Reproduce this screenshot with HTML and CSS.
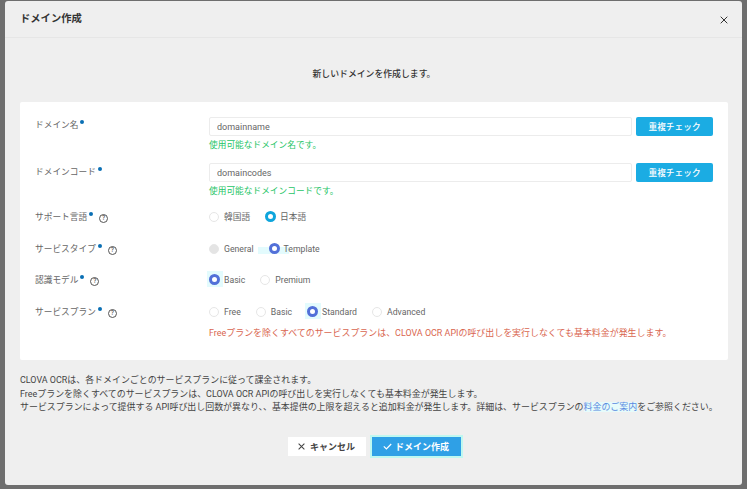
FILE: index.html
```html
<!DOCTYPE html>
<html lang="ja">

<head>
    <meta charset="UTF-8">
    <meta name="viewport" content="width=device-width, initial-scale=1.0">
    <title>ドメイン作成</title>
    <link rel="stylesheet" href="styles.css">
</head>

<body>
    <div class="modal">
        <div class="modal-header">
            <h1>ドメイン作成</h1>
            <svg class="close-icon" viewBox="0 0 8 8"><path d="M.7.7l6.6 6.6M7.3.7L.7 7.3" /></svg>
        </div>

        <div class="modal-body">
            <p class="intro">新しいドメインを作成します。</p>

            <form class="panel">
                <div class="form-row row-name">
                    <div class="label">ドメイン名<span class="req"></span></div>
                    <div class="field">
                        <div class="input-line">
                            <input type="text" value="domainname">
                            <button type="button" class="check-btn">重複チェック</button>
                        </div>
                        <div class="ok-msg">使用可能なドメイン名です。</div>
                    </div>
                </div>

                <div class="form-row row-code">
                    <div class="label">ドメインコード<span class="req"></span></div>
                    <div class="field">
                        <div class="input-line">
                            <input type="text" value="domaincodes">
                            <button type="button" class="check-btn">重複チェック</button>
                        </div>
                        <div class="ok-msg">使用可能なドメインコードです。</div>
                    </div>
                </div>

                <div class="form-row row-lang">
                    <div class="label">サポート言語<span class="req"></span><span class="help">?</span></div>
                    <div class="radios">
                        <span class="radio"><i class="dot"></i>韓国語</span>
                        <span class="radio"><i class="dot on-cyan"></i>日本語</span>
                    </div>
                </div>

                <div class="form-row row-type">
                    <div class="label">サービスタイプ<span class="req"></span><span class="help">?</span></div>
                    <div class="radios">
                        <span class="radio"><i class="dot off"></i>General</span>
                        <span class="radio"><i class="dot on band"></i>Template</span>
                    </div>
                </div>

                <div class="form-row row-model">
                    <div class="label">認識モデル<span class="req"></span><span class="help">?</span></div>
                    <div class="radios">
                        <span class="radio"><i class="dot on glow"></i>Basic</span>
                        <span class="radio"><i class="dot"></i>Premium</span>
                    </div>
                </div>

                <div class="form-row row-plan">
                    <div class="label">サービスプラン<span class="req"></span><span class="help">?</span></div>
                    <div class="field">
                        <div class="radios">
                            <span class="radio"><i class="dot"></i>Free</span>
                            <span class="radio"><i class="dot"></i>Basic</span>
                            <span class="radio"><i class="dot on glow"></i>Standard</span>
                            <span class="radio"><i class="dot"></i>Advanced</span>
                        </div>
                        <div class="warn-msg">Freeプランを除くすべてのサービスプランは、CLOVA OCR APIの呼び出しを実行しなくても基本料金が発生します。</div>
                    </div>
                </div>
            </form>

            <div class="notes">
                <p>CLOVA OCRは、各ドメインごとのサービスプランに従って課金されます。</p>
                <p>Freeプランを除くすべてのサービスプランは、CLOVA OCR APIの呼び出しを実行しなくても基本料金が発生します。</p>
                <p>サービスプランによって提供する API呼び出し回数が異なり、、基本提供の上限を超えると追加料金が発生します。詳細は、サービスプランの<a href="#">料金のご案内</a>をご参照ください。</p>
            </div>

            <div class="actions">
                <button type="button" class="btn-cancel">
                    <svg viewBox="0 0 8 8"><path d="M.7.7l6.6 6.6M7.3.7L.7 7.3" /></svg>キャンセル
                </button>
                <button type="button" class="btn-create">
                    <svg viewBox="0 0 9 7"><path d="M.8 3.4l2.6 2.5L8.2 1" /></svg>ドメイン作成
                </button>
            </div>
        </div>
    </div>
</body>

</html>
```

FILE: styles.css
```css
* {
    box-sizing: border-box;
}

body {
    margin: 0;
    height: 489px;
    overflow: hidden;
    padding: 1px 5px 4px 5px;
    background-color: #6e6e6e;
    font-family: Roboto, "Noto Sans CJK JP", sans-serif;
    font-size: 8.7px;
    color: #555;
}

.modal {
    height: 484px;
    background-color: #efefef;
    border-radius: 3px;
    display: flex;
    flex-direction: column;
}

.modal-header {
    height: 37px;
    flex: none;
    display: flex;
    align-items: center;
    justify-content: space-between;
    padding: 0 14px 0 15px;
    border-bottom: 1px solid #e6e6e6;
}

h1 {
    margin: 0 0 3px 0;
    font-size: 10.3px;
    font-weight: 700;
    color: #333;
}

.close-icon {
    width: 8px;
    height: 8px;
    margin-top: 2px;
    fill: none;
    stroke: #333;
    stroke-width: 1;
}

.modal-body {
    flex: 1;
    padding: 0 14px 0 15px;
}

.intro {
    margin: 0;
    height: 64px;
    padding-top: 29px;
    text-align: center;
    font-size: 8.85px;
    font-weight: 500;
    color: #333;
}

.panel {
    position: relative;
    z-index: 0;
    height: 258px;
    background-color: #fff;
    padding: 15px 15px 0 15px;
    border-radius: 2px;
}

.form-row {
    display: flex;
}

.row-name,
.row-code {
    height: 46px;
}

.row-lang,
.row-model {
    height: 32px;
}

.row-type {
    height: 31px;
}

.label {
    width: 174px;
    flex: none;
    padding-top: 2px;
    line-height: 12px;
    color: #666;
    display: flex;
    align-items: flex-start;
}

.row-code .label {
    padding-top: 3px;
}

.req {
    width: 4px;
    height: 4px;
    margin: 1px 0 0 2px;
    border-radius: 50%;
    background-color: #0a6fb4;
}

.help {
    width: 9px;
    height: 9px;
    margin: 3px 0 0 6px;
    border: 1px solid #555;
    border-radius: 50%;
    font-size: 6.5px;
    line-height: 7px;
    text-align: center;
    font-weight: 500;
    color: #555;
}

.field {
    flex: 1;
}

.input-line {
    display: flex;
    gap: 4px;
    height: 19px;
}

input {
    flex: 1;
    min-width: 0;
    height: 19px;
    padding: 0 7px;
    border: 1px solid #ececec;
    border-radius: 2px;
    font-family: inherit;
    font-size: 9px;
    color: #666;
    outline: none;
}

.check-btn {
    width: 77px;
    height: 19px;
    padding: 0;
    border: none;
    border-radius: 2px;
    background-color: #1bace3;
    color: #fff;
    font-family: inherit;
    font-size: 8.7px;
    font-weight: 500;
}

.ok-msg {
    margin-top: 3px;
    line-height: 12px;
    color: #1fc567;
}

.warn-msg {
    margin-top: 8px;
    font-size: 8.95px;
    line-height: 12px;
    color: #d9664f;
}

.radios {
    display: flex;
    align-items: center;
    gap: 15px;
    height: 15px;
    color: #666;
}

.radio {
    display: flex;
    align-items: center;
    gap: 5px;
    white-space: nowrap;
}

.dot {
    position: relative;
    width: 10px;
    height: 10px;
    border: 1px solid #e6e6e6;
    border-radius: 50%;
    background-color: #fff;
}

.dot.off {
    background-color: #e4e4e4;
}

.dot.on,
.dot.on-cyan {
    width: 11px;
    height: 11px;
    margin-right: -1px;
    border: 3px solid #5270d8;
}

.dot.on-cyan {
    border-color: #0ea5dc;
}

/* highlight squares behind the selected radios */
.dot.glow::before,
.dot.band::before {
    content: "";
    position: absolute;
    z-index: -1;
    background-color: #e3fbfd;
}

.dot.glow::before {
    left: -5px;
    top: -6px;
    width: 16px;
    height: 16px;
}

.dot.band::before {
    left: -14px;
    top: 1px;
    width: 31px;
    height: 7px;
}

.notes {
    margin-top: 14px;
    font-size: 8.95px;
    color: #444;
}

.notes p {
    margin: 0;
    line-height: 13.5px;
}

.notes a {
    color: #5b8ae0;
    text-decoration: none;
    background-color: #e6fbfb;
}

.actions {
    display: flex;
    justify-content: center;
    gap: 6px;
    margin-top: 22.5px;
}

.actions button {
    height: 19px;
    padding: 0;
    border: none;
    font-family: inherit;
    font-size: 9px;
    font-weight: 700;
    display: flex;
    align-items: center;
    justify-content: center;
}

.actions svg {
    fill: none;
    stroke-width: 1.2;
}

.btn-cancel {
    width: 78px;
    gap: 5px;
    background-color: #fff;
    color: #444;
}

.btn-cancel svg {
    width: 7px;
    height: 7px;
    stroke: #444;
}

.btn-create {
    width: 89px;
    gap: 3px;
    background-color: #2fa0e6;
    color: #fff;
    box-shadow: 0 0 0 2px #bff8f0;
}

.btn-create svg {
    width: 9px;
    height: 7px;
    stroke: #fff;
}
```
